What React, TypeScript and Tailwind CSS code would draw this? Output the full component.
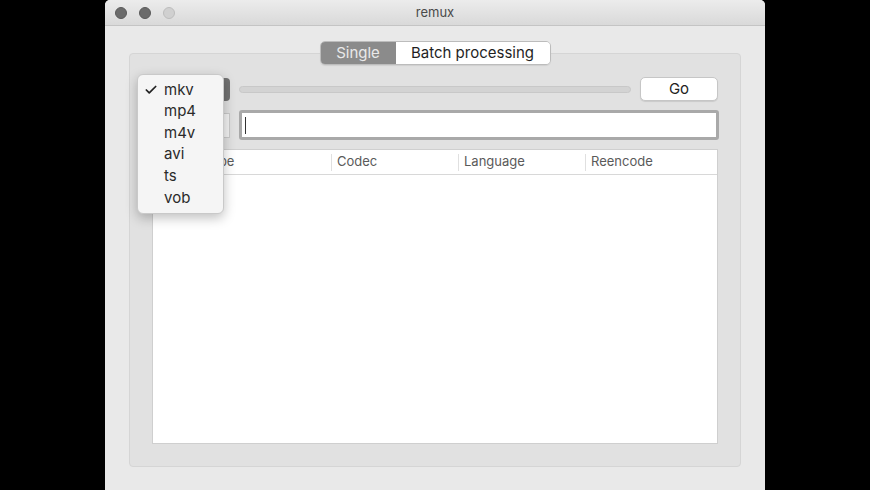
import { Check } from "lucide-react";

const font = { fontFamily: "Inter, 'Noto Sans', sans-serif" };

function TrafficLights() {
  return (
    <div className="flex items-center gap-[12px] pl-[10px]">
      <span className="h-[12px] w-[12px] rounded-full bg-[#6b6b6b] border border-[#5a5a5a]" />
      <span className="h-[12px] w-[12px] rounded-full bg-[#6b6b6b] border border-[#5a5a5a]" />
      <span className="h-[12px] w-[12px] rounded-full bg-[#d0d0d0] border border-[#bdbdbd]" />
    </div>
  );
}

function FormatMenu() {
  const items = ["mkv", "mp4", "m4v", "avi", "ts", "vob"];
  return (
    <div className="absolute left-[7px] top-[20px] z-20 w-[87px] rounded-[6px] border border-[#c9c9c9] bg-[#f5f5f5] py-[4px] shadow-[0_4px_12px_rgba(0,0,0,0.25)]">
      {items.map((it, i) => (
        <div key={it} className="flex h-[21.6px] items-center text-[15px] text-[#2a2a2a]">
          <span className="flex w-[26px] justify-end pr-[6px]">
            {i === 0 && <Check size={14} strokeWidth={3} className="text-[#222]" />}
          </span>
          <span>{it}</span>
        </div>
      ))}
    </div>
  );
}

export default function App() {
  return (
    <div className="flex h-[490px] w-[870px] justify-center overflow-hidden bg-black" style={font}>
      <div className="flex h-[490px] w-[660px] flex-col rounded-t-[5px] bg-[#e9e9e9]">
        {/* title bar */}
        <div className="relative flex h-[26px] items-center rounded-t-[5px] border-b border-[#c4c4c4] bg-gradient-to-b from-[#ececec] to-[#d9d9d9]">
          <TrafficLights />
          <div className="absolute inset-x-0 top-0 flex h-[25px] items-center justify-center text-[13px] text-[#4a4a4a]">
            remux
          </div>
        </div>

        {/* body */}
        <div className="flex flex-1 flex-col px-[24px] pb-[23px] pt-[15px]">
          <div className="relative z-10 flex justify-center">
            <div className="flex h-[24px] overflow-hidden rounded-[5px] border border-[#bcbcbc] text-[15px] shadow-[0_1px_1px_rgba(0,0,0,0.08)]">
              <div className="flex w-[75px] items-center justify-center bg-[#8b8b8b] text-[#e9e9e9]">Single</div>
              <div className="flex w-[154px] items-center justify-center bg-white text-[#1f1f1f]">Batch processing</div>
            </div>
          </div>

          <div className="relative -mt-[12px] flex flex-1 flex-col gap-[9px] rounded-[4px] border border-[#d5d5d5] bg-[#e1e1e1] px-[22px] pb-[22px] pt-[23px]">
            <FormatMenu />

            {/* row 1 */}
            <div className="flex h-[24px] items-center gap-[9px]">
              <div className="h-[23px] w-[78px] rounded-[4px] bg-[#727272]" />
              <div className="h-[7px] flex-1 rounded-full bg-[#d3d3d3] border border-[#c8c8c8]" />
              <button className="flex h-[24px] w-[78px] items-center justify-center rounded-[5px] border border-[#c6c6c6] bg-white text-[15px] text-[#222] shadow-[0_1px_1px_rgba(0,0,0,0.1)]">
                Go
              </button>
            </div>

            {/* row 2 */}
            <div className="-mr-[1px] flex h-[30px] items-center gap-[9px]">
              <div className="h-[25px] w-[78px] border border-[#c9c9c9] bg-[#f2f2f2]" />
              <div className="flex h-[30px] flex-1 items-center rounded-[3px] border-[3px] border-[#a9a9a9] bg-white pl-[3px]">
                <span className="h-[17px] w-[1px] bg-[#333]" />
              </div>
            </div>

            {/* table */}
            <div className="flex flex-1 flex-col border border-[#cfcfcf] bg-white">
              <div className="flex h-[25px] items-center border-b border-[#d8d8d8] text-[13px] text-[#5a5a5a]">
                <div className="h-[17px] w-[46px] border-r border-[#e0e0e0]" />
                <div className="flex h-[17px] w-[133px] items-center border-r border-[#e0e0e0] pl-[5px]">Type</div>
                <div className="flex h-[17px] w-[127px] items-center border-r border-[#e0e0e0] pl-[5px]">Codec</div>
                <div className="flex h-[17px] w-[127px] items-center border-r border-[#e0e0e0] pl-[5px]">Language</div>
                <div className="flex h-[17px] flex-1 items-center pl-[5px]">Reencode</div>
              </div>
              <div className="flex-1" />
            </div>
          </div>
        </div>
      </div>
    </div>
  );
}
